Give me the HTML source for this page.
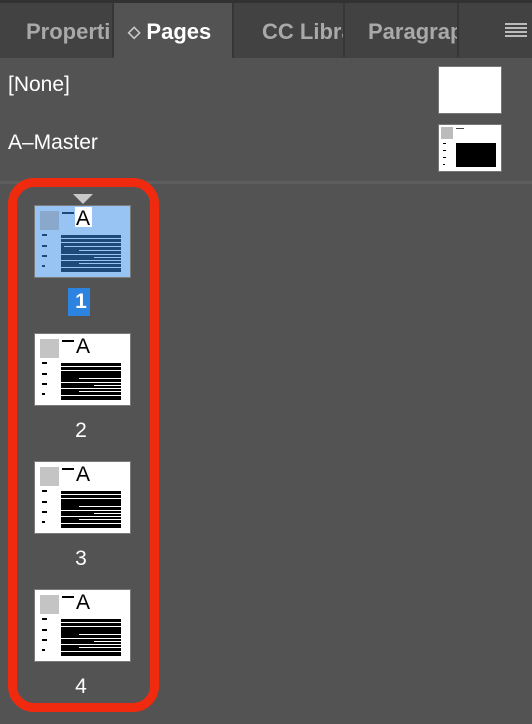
<!DOCTYPE html>
<html><head><style>
body{margin:0;width:532px;height:724px;background:#535353;overflow:hidden;font-family:"Liberation Sans",sans-serif;position:relative}
.top{position:absolute;left:0;top:0;width:532px;height:58px;background:#424242;border-top:3px solid #323232;box-sizing:border-box}
.tab{position:absolute;top:3px;height:54px;font-weight:bold;font-size:22px;color:#a9a9a9;line-height:58px;overflow:hidden;white-space:nowrap;border-right:2px solid #363636;box-sizing:border-box}
.act{background:#535353;color:#fff;height:55px}
.row{position:absolute;left:8px;color:#fff;font-size:21px}
.sep{position:absolute;left:0;top:181px;width:532px;height:3px;background:#5e5e5e}
.red{position:absolute;left:8px;top:178px;width:151px;height:534px;border:9px solid #f02a0e;border-radius:26px;box-sizing:border-box}
.num{position:absolute;width:30px;text-align:center;color:#fff;font-size:21px;font-weight:bold;left:66px}
.th{position:absolute;left:34px}
</style></head><body>
<div class="top"></div>
<div class="tab" style="left:0;width:114px;padding-left:26px">Properti</div>
<div class="tab act" style="left:114px;width:120px;padding-left:14px"><span style="font-size:16px;color:#ccc;position:relative;top:-2px">◇</span> Pages</div>
<div class="tab" style="left:234px;width:111px;padding-left:28px">CC Libra</div>
<div class="tab" style="left:345px;width:114px;padding-left:23px">Paragrap</div>
<div style="position:absolute;left:505px;top:27px;width:22px;height:2px;background:#bbb;box-shadow:0 4px 0 #bbb,0 8px 0 #bbb,0 -4px 0 #bbb"></div>
<div class="row" style="top:73px">[None]</div>
<div style="position:absolute;left:438px;top:66px;width:64px;height:48px;background:#fff;border:1px solid #777;box-sizing:border-box"></div>
<div class="row" style="top:131px">A–Master</div>
<svg style="position:absolute;left:438px;top:124px" width="64" height="48" viewBox="0 0 64 48"><rect x="0.5" y="0.5" width="63" height="47" fill="#fff" stroke="#777"/><rect x="3" y="3" width="12" height="12" fill="#bbb"/><rect x="18" y="4" width="8" height="1" fill="#444"/><g fill="#000"><rect x="18" y="19" width="40" height="24"/></g><g fill="#000"><rect x="5" y="19" width="3" height="1"/><rect x="5" y="26" width="3" height="1"/><rect x="5" y="33" width="3" height="1"/><rect x="5" y="40" width="2" height="1"/></g></svg>
<div class="sep"></div>
<div class="red"></div>
<svg style="position:absolute;left:73px;top:194px" width="20" height="10"><polygon points="0,0 20,0 10,10" fill="#c8c8c8"/></svg>

<svg class="th" style="top:205px" width="97" height="73" viewBox="0 0 97 73"><rect x="0.5" y="0.5" width="96" height="72" fill="#98c4f4" stroke="#7a7a7a"/><rect x="6" y="6" width="19" height="19" fill="#8aa8cc"/><rect x="28" y="7" width="12" height="2" fill="#1e4a7a"/><rect x="41" y="2" width="17" height="20" fill="#fff"/><text x="42" y="20" font-size="21" font-family="Liberation Sans" fill="#000">A</text><rect x="27" y="30" width="60" height="37" fill="#1e4a7a"/><g fill="#98c4f4"><rect x="27" y="33" width="60" height="1"/><rect x="27" y="37" width="60" height="1"/><rect x="30" y="41" width="57" height="1"/><rect x="45" y="45" width="42" height="1"/><rect x="27" y="49" width="60" height="1"/><rect x="60" y="52" width="28" height="1"/><rect x="27" y="55" width="60" height="1"/><rect x="45" y="58" width="42" height="1"/><rect x="27" y="62" width="60" height="1"/></g><g fill="#1e4a7a"><rect x="8" y="29" width="5" height="2"/><rect x="8" y="40" width="5" height="2"/><rect x="8" y="50" width="5" height="2"/><rect x="8" y="60" width="3" height="2"/></g></svg>
<div style="position:absolute;left:68px;top:288px;width:22px;height:28px;background:#2d84e0"></div>
<div class="num" style="top:290px">1</div>

<svg class="th" style="top:333px" width="97" height="73" viewBox="0 0 97 73"><rect x="0.5" y="0.5" width="96" height="72" fill="#fff" stroke="#7a7a7a"/><rect x="6" y="6" width="19" height="19" fill="#c4c4c4"/><rect x="28" y="7" width="12" height="2" fill="#000"/><text x="42" y="20" font-size="21" font-family="Liberation Sans" fill="#000">A</text><rect x="27" y="30" width="60" height="37" fill="#000"/><g fill="#fff"><rect x="27" y="33" width="60" height="1"/><rect x="27" y="37" width="60" height="1"/><rect x="45" y="45" width="42" height="1"/><rect x="27" y="49" width="60" height="1"/><rect x="60" y="52" width="28" height="1"/><rect x="27" y="55" width="60" height="1"/><rect x="45" y="58" width="42" height="1"/><rect x="27" y="62" width="60" height="1"/></g><g fill="#000"><rect x="8" y="29" width="5" height="2"/><rect x="8" y="40" width="5" height="2"/><rect x="8" y="50" width="5" height="2"/><rect x="8" y="60" width="3" height="2"/></g></svg>
<div class="num" style="top:419px;font-weight:normal">2</div>

<svg class="th" style="top:461px" width="97" height="73" viewBox="0 0 97 73"><rect x="0.5" y="0.5" width="96" height="72" fill="#fff" stroke="#7a7a7a"/><rect x="6" y="6" width="19" height="19" fill="#c4c4c4"/><rect x="28" y="7" width="12" height="2" fill="#000"/><text x="42" y="20" font-size="21" font-family="Liberation Sans" fill="#000">A</text><rect x="27" y="30" width="60" height="37" fill="#000"/><g fill="#fff"><rect x="27" y="33" width="60" height="1"/><rect x="27" y="37" width="60" height="1"/><rect x="45" y="45" width="42" height="1"/><rect x="27" y="49" width="60" height="1"/><rect x="60" y="52" width="28" height="1"/><rect x="27" y="55" width="60" height="1"/><rect x="45" y="58" width="42" height="1"/><rect x="27" y="62" width="60" height="1"/></g><g fill="#000"><rect x="8" y="29" width="5" height="2"/><rect x="8" y="40" width="5" height="2"/><rect x="8" y="50" width="5" height="2"/><rect x="8" y="60" width="3" height="2"/></g></svg>
<div class="num" style="top:547px;font-weight:normal">3</div>

<svg class="th" style="top:589px" width="97" height="73" viewBox="0 0 97 73"><rect x="0.5" y="0.5" width="96" height="72" fill="#fff" stroke="#7a7a7a"/><rect x="6" y="6" width="19" height="19" fill="#c4c4c4"/><rect x="28" y="7" width="12" height="2" fill="#000"/><text x="42" y="20" font-size="21" font-family="Liberation Sans" fill="#000">A</text><rect x="27" y="30" width="60" height="37" fill="#000"/><g fill="#fff"><rect x="27" y="33" width="60" height="1"/><rect x="27" y="37" width="60" height="1"/><rect x="45" y="45" width="42" height="1"/><rect x="27" y="49" width="60" height="1"/><rect x="60" y="52" width="28" height="1"/><rect x="27" y="55" width="60" height="1"/><rect x="45" y="58" width="42" height="1"/><rect x="27" y="62" width="60" height="1"/></g><g fill="#000"><rect x="8" y="29" width="5" height="2"/><rect x="8" y="40" width="5" height="2"/><rect x="8" y="50" width="5" height="2"/><rect x="8" y="60" width="3" height="2"/></g></svg>
<div class="num" style="top:675px;font-weight:normal">4</div>
</body></html>
